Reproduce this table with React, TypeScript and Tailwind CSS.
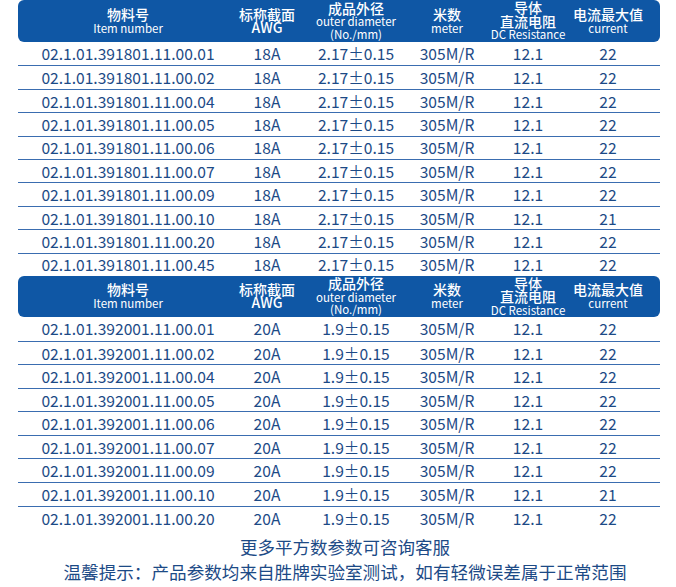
import React from "react";

const COLS = "grid grid-cols-[220px_58px_120px_62px_100px_60px_1fr]";

type Row = [string, string, string, string, string, string];

const t1: Row[] = [
  ["02.1.01.391801.11.00.01", "18A", "2.17±0.15", "305M/R", "12.1", "22"],
  ["02.1.01.391801.11.00.02", "18A", "2.17±0.15", "305M/R", "12.1", "22"],
  ["02.1.01.391801.11.00.04", "18A", "2.17±0.15", "305M/R", "12.1", "22"],
  ["02.1.01.391801.11.00.05", "18A", "2.17±0.15", "305M/R", "12.1", "22"],
  ["02.1.01.391801.11.00.06", "18A", "2.17±0.15", "305M/R", "12.1", "22"],
  ["02.1.01.391801.11.00.07", "18A", "2.17±0.15", "305M/R", "12.1", "22"],
  ["02.1.01.391801.11.00.09", "18A", "2.17±0.15", "305M/R", "12.1", "22"],
  ["02.1.01.391801.11.00.10", "18A", "2.17±0.15", "305M/R", "12.1", "21"],
  ["02.1.01.391801.11.00.20", "18A", "2.17±0.15", "305M/R", "12.1", "22"],
  ["02.1.01.391801.11.00.45", "18A", "2.17±0.15", "305M/R", "12.1", "22"],
];

const t2: Row[] = [
  ["02.1.01.392001.11.00.01", "20A", "1.9±0.15", "305M/R", "12.1", "22"],
  ["02.1.01.392001.11.00.02", "20A", "1.9±0.15", "305M/R", "12.1", "22"],
  ["02.1.01.392001.11.00.04", "20A", "1.9±0.15", "305M/R", "12.1", "22"],
  ["02.1.01.392001.11.00.05", "20A", "1.9±0.15", "305M/R", "12.1", "22"],
  ["02.1.01.392001.11.00.06", "20A", "1.9±0.15", "305M/R", "12.1", "22"],
  ["02.1.01.392001.11.00.07", "20A", "1.9±0.15", "305M/R", "12.1", "22"],
  ["02.1.01.392001.11.00.09", "20A", "1.9±0.15", "305M/R", "12.1", "22"],
  ["02.1.01.392001.11.00.10", "20A", "1.9±0.15", "305M/R", "12.1", "21"],
  ["02.1.01.392001.11.00.20", "20A", "1.9±0.15", "305M/R", "12.1", "22"],
];

function HCell({ lines }: { lines: { t: string; en?: boolean }[] }) {
  return (
    <div className="flex flex-col items-center justify-center whitespace-nowrap">
      {lines.map((l, i) =>
        l.en ? (
          <div key={i} className="text-[11.5px] leading-[12.5px] text-white">
            {l.t}
          </div>
        ) : (
          <div key={i} className="text-[14px] leading-[13.5px] font-medium text-white">
            {l.t}
          </div>
        )
      )}
    </div>
  );
}

function Header({ h }: { h: string }) {
  return (
    <div className={`${COLS} ${h} bg-[#0f57a5] rounded-[6px]`}>
      <HCell lines={[{ t: "物料号" }, { t: "Item number", en: true }]} />
      <HCell lines={[{ t: "标称截面" }, { t: "AWG" }]} />
      <HCell lines={[{ t: "成品外径" }, { t: "outer diameter", en: true }, { t: "(No./mm)", en: true }]} />
      <HCell lines={[{ t: "米数" }, { t: "meter", en: true }]} />
      <HCell lines={[{ t: "导体" }, { t: "直流电阻" }, { t: "DC Resistance", en: true }]} />
      <HCell lines={[{ t: "电流最大值" }, { t: "current", en: true }]} />
      <div />
    </div>
  );
}

function Rows({ rows, h }: { rows: Row[]; h: string }) {
  return (
    <div>
      {rows.map((r, i) => (
        <div
          key={i}
          className={`${COLS} ${h} items-center text-[15.6px] text-[#1c4a86] ${
            i > 0 ? "border-t-[1.5px] border-[#3a6db0]" : ""
          }`}
        >
          {r.map((c, j) => (
            <div key={j} className="text-center whitespace-nowrap leading-none pt-[1px]">
              {c}
            </div>
          ))}
          <div />
        </div>
      ))}
    </div>
  );
}

export default function App() {
  return (
    <div
      className="w-[676px] h-[587px] bg-white overflow-hidden"
      style={{ fontFamily: '"Noto Sans CJK SC", "Noto Sans", sans-serif' }}
    >
      <div className="ml-[18px] w-[642px]">
        <Header h="h-[42px]" />
        <Rows rows={t1} h="h-[23.4px]" />
        <Header h="h-[41px]" />
        <Rows rows={t2} h="h-[23.6px]" />
      </div>
      <div className="mt-[6px] pl-[14px] flex flex-col items-center text-[#1c4a86]">
        <div className="text-[17.5px] leading-[24px]">更多平方数参数可咨询客服</div>
        <div className="text-[17.6px] leading-[25px]">温馨提示：产品参数均来自胜牌实验室测试，如有轻微误差属于正常范围</div>
      </div>
    </div>
  );
}
